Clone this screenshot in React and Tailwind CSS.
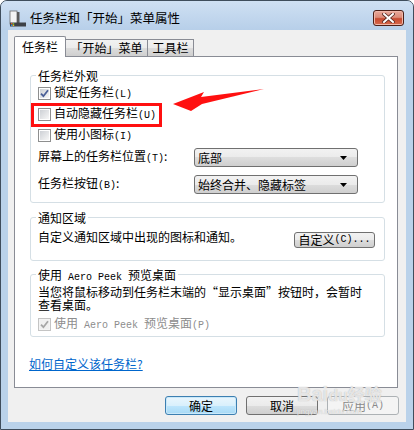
import React from 'react';

const btnFace = 'bg-[linear-gradient(#f2f2f2,#ebebeb_50%,#dddddd_50%,#cfcfcf)]';

function M({ children }) {
  return <span className="font-['Liberation_Mono',monospace] text-[10px]">{children}</span>;
}

function Check({ checked, disabled }) {
  return (
    <span
      className={`flex h-[13px] w-[13px] shrink-0 border p-[1px] ${
        disabled ? 'border-[#c4c4c4] bg-[#f4f4f4]' : 'border-[#8e8f8f] bg-white'
      }`}
    >
      <span
        className={`flex flex-1 items-center justify-center ${
          disabled ? 'bg-[#f0f0f0]' : 'bg-[linear-gradient(135deg,#cdd0d5,#f7f7f7)]'
        }`}
      >
        {checked && (
          <svg width="9" height="9" viewBox="0 0 9 9">
            <path
              d="M1 4.6 L3.4 7.2 L8 1.2"
              fill="none"
              stroke={disabled ? '#a6a6a6' : '#4a5f97'}
              strokeWidth="1.8"
            />
          </svg>
        )}
      </span>
    </span>
  );
}

function CheckRow({ checked, disabled, children }) {
  return (
    <div className="flex h-[21px] items-center gap-[3px]">
      <Check checked={checked} disabled={disabled} />
      <span className={disabled ? 'text-[#8d8d8d]' : ''}>{children}</span>
    </div>
  );
}

function Dropdown({ children }) {
  return (
    <div
      className={`flex h-[19px] w-[164px] items-center justify-between rounded-[3px] border border-[#707070] pl-[3px] pr-[10px] ${btnFace}`}
    >
      <span>{children}</span>
      <svg width="7" height="4" viewBox="0 0 7 4">
        <path d="M0 0H7L3.5 4Z" fill="#000" />
      </svg>
    </div>
  );
}

function Group({ title, className = '', children }) {
  return (
    <div className={`rounded-[3px] border border-[#d5dfe5] ${className}`}>
      <div className="-mt-[8px] ml-[5px] h-[15px] w-fit bg-white px-[2px] leading-[15px]">{title}</div>
      {children}
    </div>
  );
}

function Button({ kind, children }) {
  if (kind === 'default') {
    return (
      <div className="flex h-[19px] w-[72px] items-center justify-center rounded-[3px] border border-[#3c7fb1] bg-[linear-gradient(#eaf6fd,#d9f0fc_50%,#bee6fd_50%,#a7d9f5)] shadow-[inset_0_0_0_1px_#c9e8f9]">
        {children}
      </div>
    );
  }
  if (kind === 'disabled') {
    return (
      <div className="flex h-[19px] w-[72px] items-center justify-center rounded-[3px] border border-[#adb2b5] bg-[#f4f4f4] text-[#8a8a8a]">
        {children}
      </div>
    );
  }
  return (
    <div className={`flex h-[19px] w-[72px] items-center justify-center rounded-[3px] border border-[#707070] ${btnFace}`}>
      {children}
    </div>
  );
}

function TaskbarIcon() {
  return (
    <svg width="17" height="17" viewBox="0 0 17 17">
      <rect x="1" y="1" width="7" height="13" fill="#f4f4f4" stroke="#6b6b6b" strokeWidth="0.8" />
      <rect x="8" y="2" width="2.5" height="11" fill="#5a5a5a" />
      <rect x="1" y="12.5" width="16" height="4" fill="#3d4147" />
      <rect x="2" y="13" width="1.5" height="1.4" fill="#e6502a" />
      <rect x="3.7" y="13" width="1.5" height="1.4" fill="#6ab63c" />
      <rect x="2" y="14.6" width="1.5" height="1.4" fill="#2c8ee0" />
      <rect x="3.7" y="14.6" width="1.5" height="1.4" fill="#f5c21b" />
    </svg>
  );
}

function CloseButton() {
  return (
    <div className="flex h-[16px] w-[31px] items-center justify-center rounded-[3px] border border-[#4b1f17] bg-[linear-gradient(#e9a99c,#dc8c79_45%,#c74a30_55%,#d66a4d)] shadow-[inset_0_0_0_1px_#f0b8aa]">
      <svg width="13" height="10" viewBox="0 0 13 10">
        <path d="M2 1L11 9M11 1L2 9" stroke="#5a2a22" strokeWidth="3.6" strokeLinecap="square" />
        <path d="M2 1L11 9M11 1L2 9" stroke="#ffffff" strokeWidth="2" strokeLinecap="square" />
      </svg>
    </div>
  );
}

export default function App() {
  return (
    <div className="relative h-[430px] w-[414px] overflow-hidden bg-white font-['Noto_Sans_CJK_SC',sans-serif] text-[12px] leading-[14px] text-black">
      <div className="flex h-[430px] w-[414px] flex-col rounded-t-[7px] border border-[#3f4d5c] bg-[#bad2ea]">
        {/* title bar */}
        <div className="flex h-[29px] shrink-0 items-center rounded-t-[6px] bg-[linear-gradient(#cfe0f3,#b7cfe9)] pl-[8px] pr-[9px] pt-[5px]">
          <TaskbarIcon />
          <span className="ml-[4px] flex-1 text-[12.5px]">任务栏和「开始」菜单属性</span>
          <CloseButton />
        </div>

        {/* client */}
        <div className="mx-[7px] flex h-[392px] shrink-0 flex-col bg-[#f0f0f0] pl-[6px] pt-[6px]">
          <div className="relative z-10 flex h-[20px] items-end">
            <div className="-mb-px flex h-[21px] w-[52px] items-center justify-center rounded-t-[2px] border border-b-0 border-[#898c95] bg-white pb-[1px]">
              任务栏
            </div>
            <div className={`flex h-[17px] w-[82px] items-center justify-center border border-b-0 border-l-0 border-[#898c95] ${btnFace}`}>
              「开始」菜单
            </div>
            <div className={`flex h-[17px] w-[46px] items-center justify-center border border-b-0 border-l-0 border-[#898c95] ${btnFace}`}>
              工具栏
            </div>
          </div>

          <div className="flex h-[332px] w-[384px] flex-col border border-[#898c95] bg-white pl-[15px] pr-[12px] pt-[18px]">
            <Group title="任务栏外观">
              <div className="pb-[8px] pl-[7px]">
                <CheckRow checked>
                  锁定任务栏<M>(L)</M>
                </CheckRow>
                <div className="relative">
                  <CheckRow>
                    自动隐藏任务栏<M>(U)</M>
                  </CheckRow>
                  <div className="absolute left-[-7px] top-[-1px] h-[24px] w-[131px] border-[3px] border-[#ff1010]" />
                </div>
                <CheckRow>
                  使用小图标<M>(I)</M>
                </CheckRow>
                <div className="mt-[2px] flex h-[19px] items-center">
                  <span className="w-[156px]">
                    屏幕上的任务栏位置<M>(T)</M>:
                  </span>
                  <Dropdown>底部</Dropdown>
                </div>
                <div className="mt-[8px] flex h-[19px] items-center">
                  <span className="w-[156px]">
                    任务栏按钮<M>(B)</M>:
                  </span>
                  <Dropdown>始终合并、隐藏标签</Dropdown>
                </div>
              </div>
            </Group>

            <Group title="通知区域" className="mt-[14px]">
              <div className="flex items-start justify-between pb-[12px] pl-[7px] pr-[9px] pt-[6px]">
                <span className="leading-[12px]">自定义通知区域中出现的图标和通知。</span>
                <div className={`mt-[1px] flex h-[16px] w-[81px] items-center justify-center rounded-[3px] border border-[#707070] ${btnFace}`}>
                  自定义<M>(C)...</M>
                </div>
              </div>
            </Group>

            <Group
              title={
                <>
                  使用<M> Aero Peek </M>预览桌面
                </>
              }
              className="mt-[13px]"
            >
              <div className="pb-[1px] pl-[7px] pr-[6px] pt-[3px]">
                <p className="leading-[13px]">
                  当您将鼠标移动到任务栏末端的“显示桌面”按钮时，会暂时
                  <br />
                  查看桌面。
                </p>
                <div className="mt-[3px]">
                  <CheckRow checked disabled>
                    使用<M> Aero Peek </M>预览桌面<M>(P)</M>
                  </CheckRow>
                </div>
              </div>
            </Group>

            <a className="-ml-px mt-[20px] w-fit text-[#0066cc] underline">如何自定义该任务栏?</a>
          </div>

          <div className="mt-[8px] flex justify-end gap-[9px] pr-[7px]">
            <Button kind="default">确定</Button>
            <Button>取消</Button>
            <Button kind="disabled">
              应用<M>(A)</M>
            </Button>
          </div>
        </div>
        <div className="flex-1" />
      </div>

      {/* annotation arrow */}
      <svg className="pointer-events-none absolute left-0 top-0" width="414" height="430">
        <polygon points="173,104 204,92 201,97 264,89 202,104 191,111" fill="#ff1010" />
      </svg>

      {/* watermark */}
      <div className="pointer-events-none absolute left-[297px] top-[383px] flex flex-col items-start text-white/70 [text-shadow:0_0_1px_#a8a8a8]">
        <span className="font-['Liberation_Sans',sans-serif] text-[20px] font-bold leading-[22px]">
          Bai<span className="text-[16px]">du</span>
          <span className="font-['Noto_Sans_CJK_SC',sans-serif] text-[17px]">经验</span>
        </span>
        <span className="font-['Liberation_Sans',sans-serif] text-[8px] leading-[9px]">jingyan.baidu.com</span>
      </div>
    </div>
  );
}
